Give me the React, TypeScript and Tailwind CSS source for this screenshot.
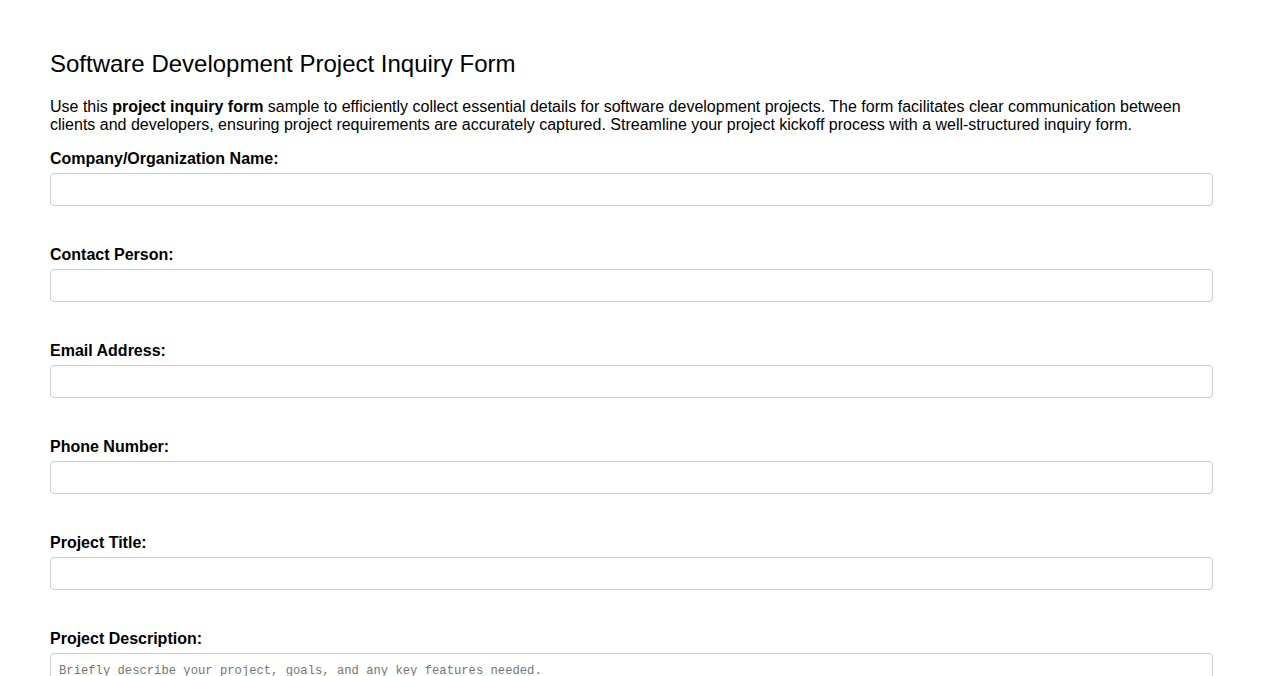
import React from 'react'

const fields = [
    'Company/Organization Name:',
    'Contact Person:',
    'Email Address:',
    'Phone Number:',
    'Project Title:',
]

const App = () => {
    return (
        <div className="min-h-screen bg-white px-[50px] pt-[50px] text-black font-['Liberation_Sans',Arial,sans-serif]">
            <h1 className="text-[24px] leading-[28px] font-normal">Software Development Project Inquiry Form</h1>
            <p className="mt-[20px] text-[16px] leading-[18px]">
                Use this <b>project inquiry form</b> sample to efficiently collect essential details for software development projects. The form facilitates clear communication between clients and developers, ensuring project requirements are accurately captured. Streamline your project kickoff process with a well-structured inquiry form.
            </p>
            <form className="mt-[16px] flex flex-col">
                {fields.map((label, index) => (
                    <div key={index} className="flex flex-col mb-[40px]">
                        <label className="text-[16px] leading-[18px] font-bold">{label}</label>
                        <input type="text" className="mt-[5px] h-[33px] w-full rounded-[4px] border border-[#cccccc] px-2 outline-none" />
                    </div>
                ))}
                <div className="flex flex-col">
                    <label className="text-[16px] leading-[18px] font-bold">Project Description:</label>
                    <textarea
                        rows={5}
                        placeholder="Briefly describe your project, goals, and any key features needed."
                        className="mt-[5px] w-full rounded-[4px] border border-[#cccccc] px-2 pt-[9px] pb-2 text-[12.2px] leading-[16px] font-['Liberation_Mono',monospace] placeholder:text-[#757575] outline-none resize-y"
                    />
                </div>
            </form>
        </div>
    )
}

export default App
